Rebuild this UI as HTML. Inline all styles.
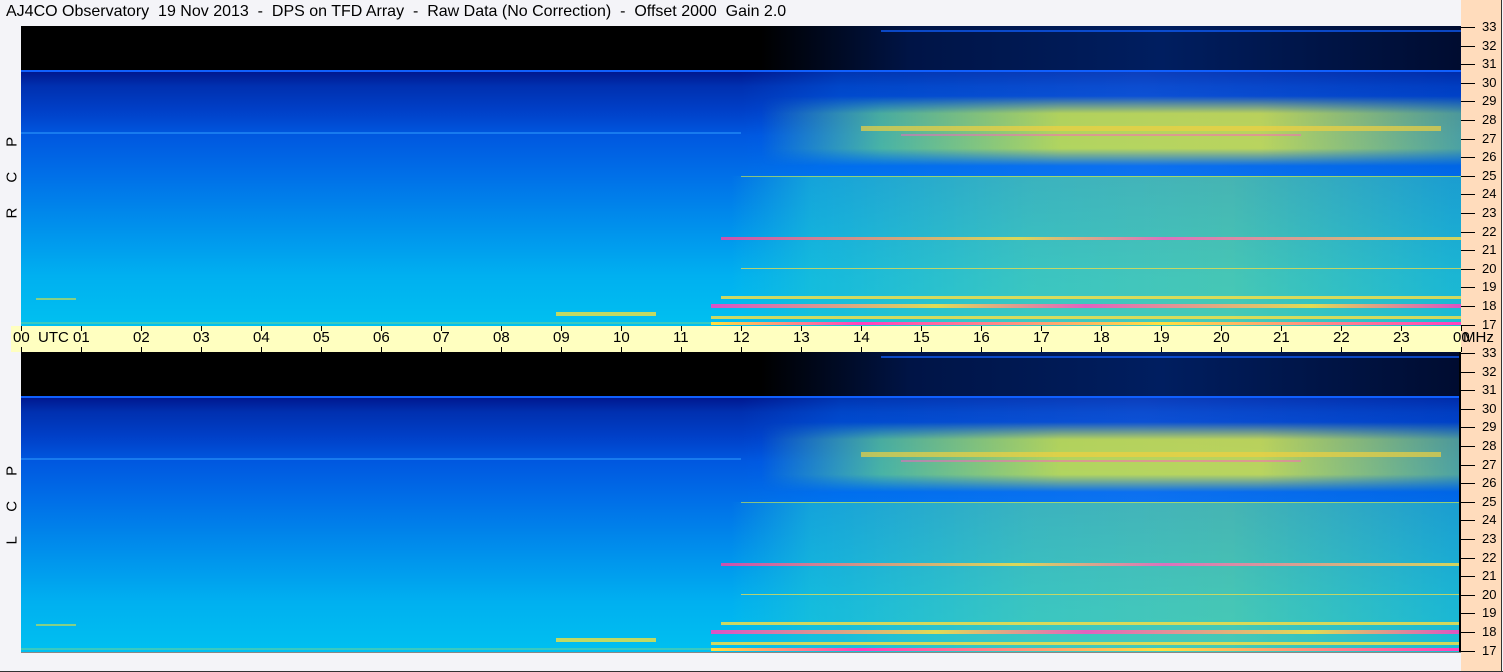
<!DOCTYPE html><html><head><style>
body{margin:0;width:1503px;height:672px;background:#f4f4f8;position:relative;overflow:hidden;font-family:"Liberation Sans",sans-serif}
.t{position:absolute;left:6px;top:3px;font-size:16px;color:#000;white-space:pre}
.peach{position:absolute;left:1461px;top:0;width:40px;height:671px;background:#ffdcbc;border-right:1px solid #333;}
.bot{position:absolute;left:0;top:671px;width:1503px;height:1px;background:#333}
.plot{position:absolute;left:21px;width:1440px;height:300px;overflow:hidden;
background:linear-gradient(to bottom,#000 0,#000 44px,#001890 46px,#0030b0 60px,#0040c8 85px,#0058e0 110px,#0070e8 150px,#0090ec 200px,#00b0f0 250px,#00c0f0 300px)}
.plot div{position:absolute}
.tb{position:absolute;left:11px;top:326px;width:1450px;height:26px;background:#ffffc0}
.tl{position:absolute;top:329px;font-size:15px}
.tk{position:absolute;width:1px;background:#000}
.lab{position:absolute;left:-20px;font-size:15px;transform:rotate(-90deg);white-space:pre;width:64px;text-align:center}
.mh{position:absolute;left:1482px;font-size:13px}
.mt{position:absolute;left:1461px;width:14px;height:1px;background:#000}
</style></head><body>
<div class="t">AJ4CO Observatory  19 Nov 2013  -  DPS on TFD Array  -  Raw Data (No Correction)  -  Offset 2000  Gain 2.0</div>
<div class="peach"></div><div class="bot"></div>

<div class="plot" style="top:26px" id="p1">
<div style="left:740px;top:0;width:700px;height:44px;background:linear-gradient(to right,rgba(0,0,0,0),rgba(0,40,140,.5) 150px,rgba(0,50,160,.6) 400px,rgba(0,30,120,.4) 700px)"></div>
<div style="left:860px;top:4px;width:580px;height:2px;background:#1060ff;opacity:.7"></div>
<div style="left:0;top:44px;width:1440px;height:2px;background:#1060ff"></div>
<div style="left:720px;top:46px;width:720px;height:254px;background:linear-gradient(to right,rgba(0,0,0,0),rgba(0,120,255,.3) 100px,rgba(30,120,255,.4) 400px,rgba(0,90,230,.3) 720px)"></div>
<div style="left:710px;top:150px;width:730px;height:150px;background:linear-gradient(to right,rgba(0,200,230,0),rgba(40,210,200,.5) 80px,rgba(100,230,150,.55) 300px,rgba(120,235,130,.55) 500px,rgba(60,220,180,.45) 720px)"></div>
<div style="left:740px;top:70px;width:700px;height:70px;-webkit-mask-image:linear-gradient(to bottom,transparent,#000 25%,#000 75%,transparent);mask-image:linear-gradient(to bottom,transparent,#000 25%,#000 75%,transparent);background:linear-gradient(to right,rgba(0,150,255,0),rgba(120,230,120,.6) 120px,rgba(220,240,60,.8) 300px,rgba(230,240,60,.8) 500px,rgba(150,230,100,.5) 700px)"></div>
<div style="left:840px;top:100px;width:580px;height:5px;background:#f0d040;opacity:.7"></div>
<div style="left:880px;top:108px;width:400px;height:2px;background:#ff60c0;opacity:.5"></div>
<div style="left:0;top:106px;width:720px;height:2px;background:#30a0ff;opacity:.5"></div>
<div style="left:700px;top:211px;width:740px;height:3px;background:linear-gradient(to right,#ff40a0,#ffe040 40%,#ff60c0 60%,#ffe040);opacity:.8"></div>
<div style="left:720px;top:150px;width:720px;height:1px;background:#e0f040;opacity:.6"></div>
<div style="left:720px;top:242px;width:720px;height:1px;background:#ffe040;opacity:.7"></div>
<div style="left:700px;top:270px;width:740px;height:3px;background:#ffe040;opacity:.8"></div>
<div style="left:690px;top:278px;width:750px;height:4px;background:linear-gradient(to right,#ff40c0,#ffe040 30%,#ff50c0 50%,#ffe040 80%,#ff40c0);opacity:.85"></div>
<div style="left:690px;top:290px;width:750px;height:3px;background:#ffe040;opacity:.8"></div>
<div style="left:690px;top:296px;width:750px;height:3px;background:linear-gradient(to right,#ffe040,#ff40c0 20%,#ffe040 60%,#ff40c0)"></div>
<div style="left:535px;top:286px;width:100px;height:4px;background:#f0e040;opacity:.8"></div>
<div style="left:0;top:296px;width:690px;height:2px;background:#60d0a0;opacity:.6"></div>
<div style="left:15px;top:272px;width:40px;height:2px;background:#e0e040;opacity:.6"></div>
</div>

<div class="tb"></div>
<div class="tl" style="left:13px">00&nbsp;&nbsp;UTC</div>

<div class="plot" style="top:352px" id="p2"></div>
<div style="position:absolute;left:1459px;top:352px;width:2px;height:300px;background:#000"></div>
<div style="position:absolute;left:21px;top:652px;width:1440px;height:1px;background:#888"></div>

<div class="lab" style="top:178px">R      C      P</div>
<div class="lab" style="top:504px">L      C      P</div>
<div class="tl" style="left:1463px">MHz</div>
<div id="ax"></div>
<script>
document.getElementById('p2').innerHTML=document.getElementById('p1').innerHTML;
let h='';
for(let i=1;i<=24;i++){let x=21+i*60;let s=i==24?'00':String(i).padStart(2,'0');
h+=`<div class="tl" style="left:${x-8}px">${s}</div><div class="tk" style="left:${x}px;top:326px;height:5px"></div><div class="tk" style="left:${x}px;top:347px;height:5px"></div>`;}
h+=`<div class="tk" style="left:21px;top:326px;height:5px"></div><div class="tk" style="left:21px;top:347px;height:5px"></div>`;
for(const base of [26,352]){for(let m=17;m<=33;m++){let y=Math.round(base+(33-m)*18.6)+1;
h+=`<div class="mt" style="top:${y}px"></div><div class="mh" style="top:${y-8}px">${m}</div>`;}}
document.getElementById('ax').innerHTML=h;
</script>
</body></html>
